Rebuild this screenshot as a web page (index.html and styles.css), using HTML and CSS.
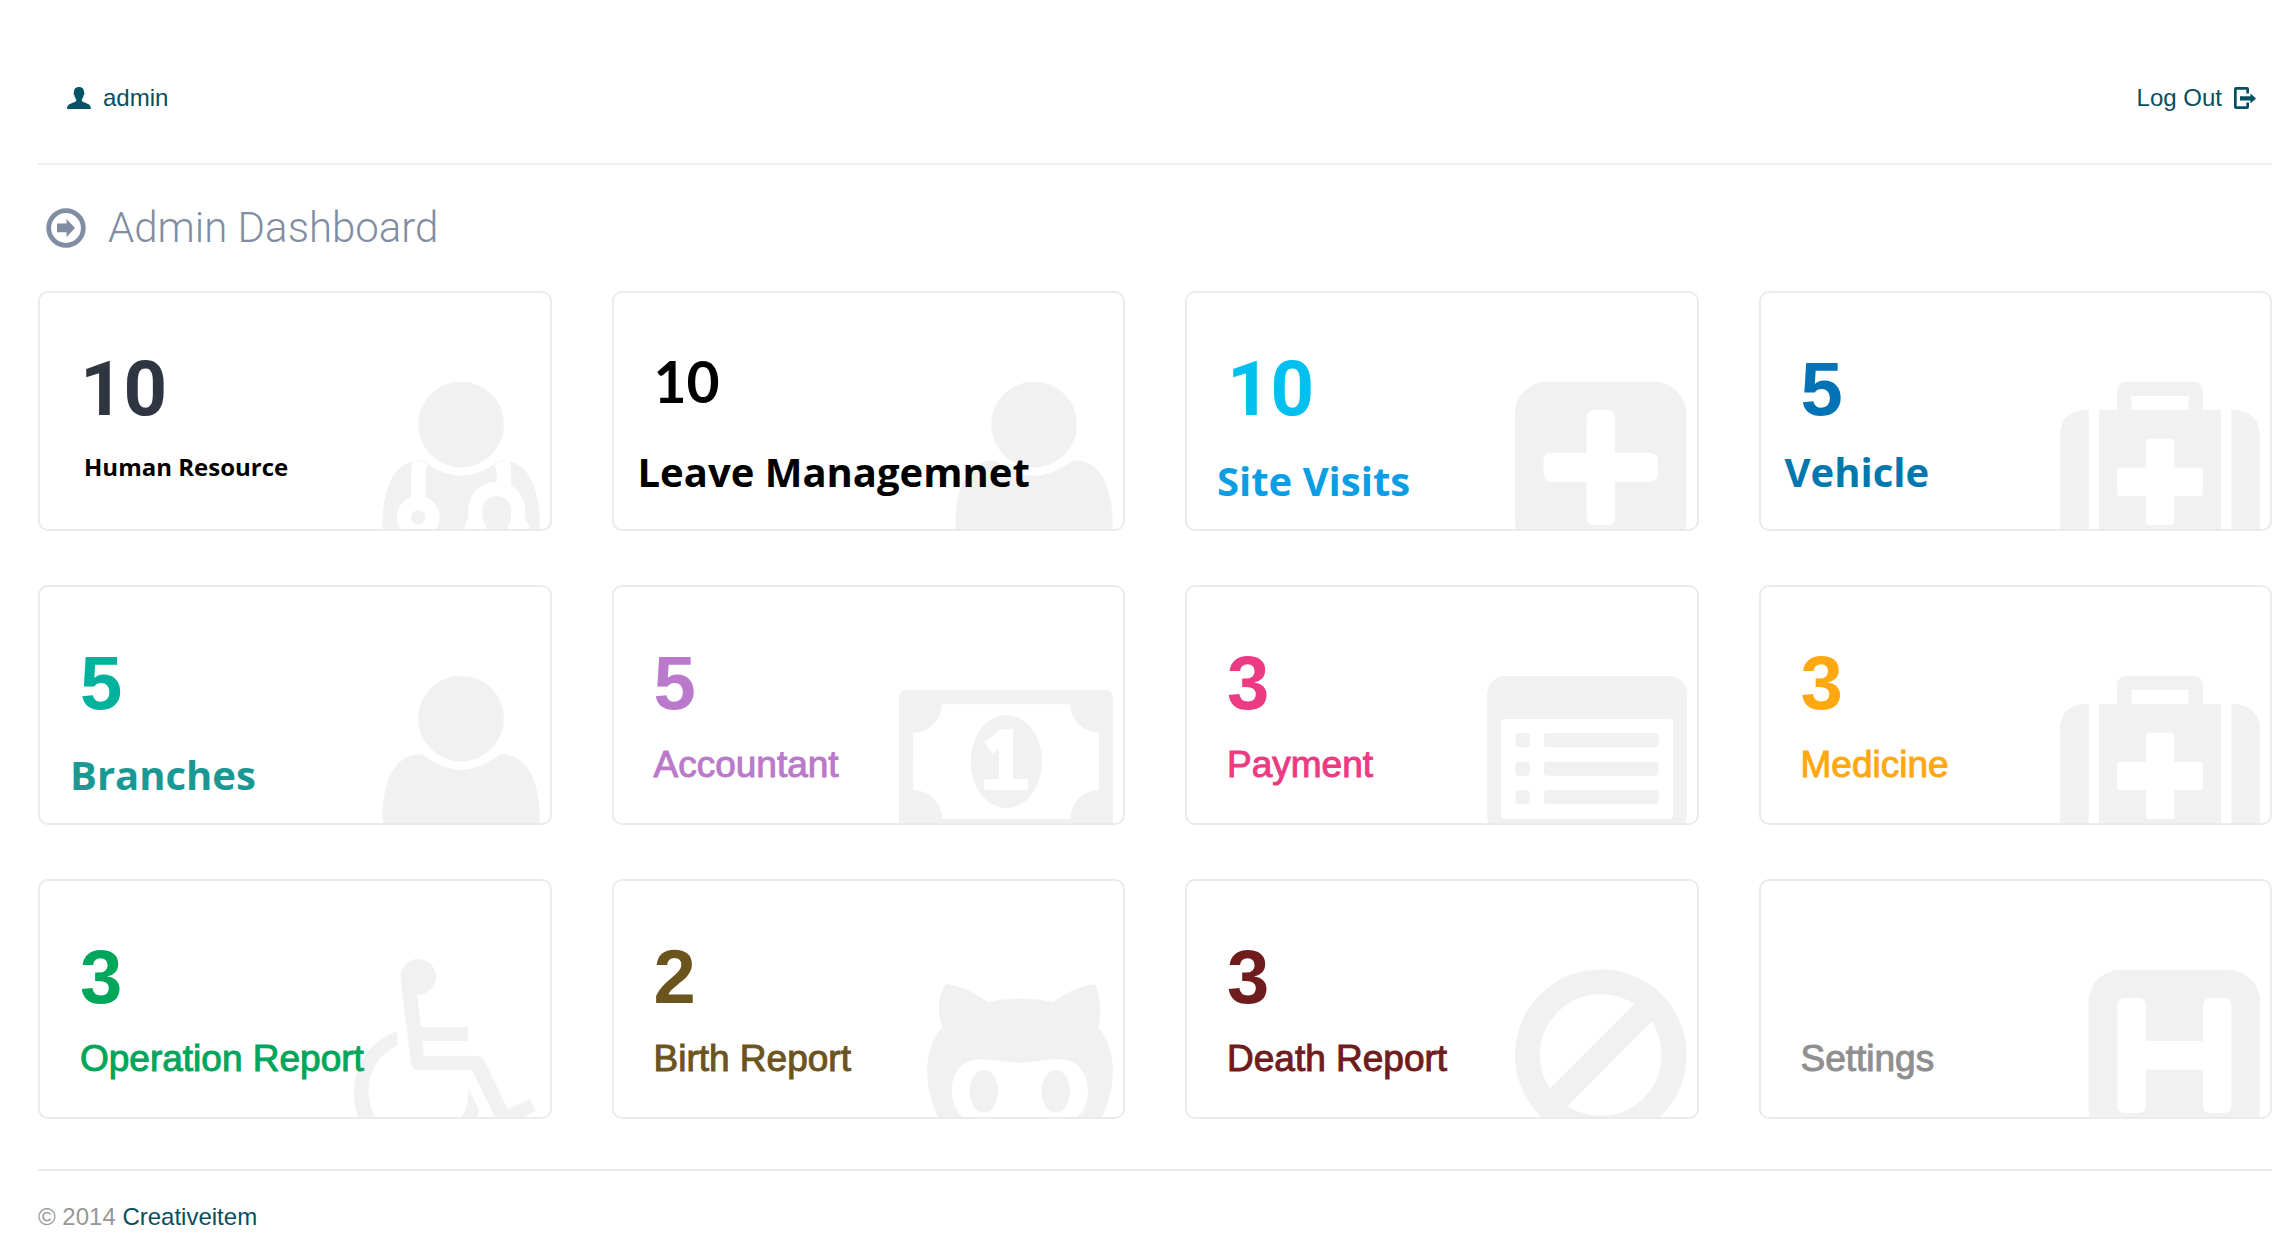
FILE: index.html
```html
<!DOCTYPE html>
<html lang="en">
<head>
<meta charset="utf-8">
<meta name="viewport" content="width=device-width, initial-scale=1">
<title>Admin Dashboard</title>
<link rel="stylesheet" href="styles.css">
</head>
<body>
<svg class="sprite" aria-hidden="true">
  <symbol id="user" viewBox="-20 0 240 160">
    <path transform="translate(52.5 -1.6) scale(.1116)" d="M1408 1405q0 120-73 189.5t-194 69.5h-874q-121 0-194-69.5t-73-189.5q0-53 3.5-103.5t14-109 26.5-108.5 43-97.5 62-81 85.5-53.5 111.5-20q9 0 42 21.5t74.5 48 108 48 133.5 21.5 133.5-21.5 108-48 74.5-48 42-21.5q61 0 111.5 20t85.5 53.5 62 81 43 97.5 26.5 108.5 14 109 3.5 103.5zm-320-893q0 159-112.5 271.5t-271.5 112.5-271.5-112.5-112.5-271.5 112.5-271.5 271.5-112.5 271.5 112.5 112.5 271.5z"/>
  </symbol>
  <symbol id="medkit" viewBox="-20 0 240 160">
    <path fill-rule="evenodd" d="M67 41V23.500q0-10.700 10.700-10.700H142.300Q153 12.800 153 23.500V41H171V165H49V41zM81.500 27V41H138.600V27zM99.500 69.700Q96 69.700 96 73.200V98.700H70.500Q67 98.700 67 102.200V123.500Q67 127 70.500 127H96V152.500Q96 156 99.500 156H120.800Q124.300 156 124.300 152.500V127H149.500Q153 127 153 123.500V102.200Q153 98.700 149.500 98.700H124.300V73.200Q124.300 69.700 120.800 69.700z"/>
    <path d="M38.800 41V165H9.900V66Q11 42 35 41zM181.300 41H185Q209 43 209.900 66V165H181.300z"/>
  </symbol>
</svg>

<header class="topbar">
  <a class="topbar__link" href="#profile">
    <svg class="topbar__icon topbar__icon--user" viewBox="0 0 24 22" aria-hidden="true"><path d="M12 0c3.600 0 5 2.200 5 5 .7.800.5 2.700-.4 3.200-.3 2-1 3-1.800 4v1.600c.4 1.200 3 1.800 5.200 2.800 2.400 1 3.700 1.900 4 5.400H0c.3-3.500 1.600-4.400 4-5.400 2.200-1 4.800-1.600 5.200-2.800v-1.600c-.8-1-1.500-2-1.800-4-.9-.5-1.100-2.400-.4-3.200C7 2.200 8.400 0 12 0z"/></svg>
    admin
  </a>
  <a class="topbar__link" href="#logout">
    Log Out
    <svg class="topbar__icon topbar__icon--exit" viewBox="0 0 22 22" aria-hidden="true"><path d="M15 6.500V2q0-2-2-2H2Q0 0 0 2v18q0 2 2 2h11q2 0 2-2v-4.500h-2.700v3.800H2.700V2.700h9.600v3.800zM6 9.300h10.500V6.400L22 11.500l-5.500 5v-3H6z"/></svg>
  </a>
</header>

<main>
  <h1 class="title">
    <svg class="title__icon" viewBox="0 0 40 40" aria-hidden="true"><circle cx="20" cy="20" r="17.300" fill="none" stroke="currentColor" stroke-width="4.800"/><path d="M11 15.500h9.500V11L29 20l-8.500 9.300v-5H11z"/></svg>
    Admin Dashboard
  </h1>

  <nav class="stats" aria-label="Dashboard sections">
    <a class="stat stat--navy" href="#human-resource">
      <svg class="stat__icon" viewBox="-20 0 240 160" aria-hidden="true">
        <use href="#user" x="-20" y="0" width="240" height="160"/>
        <g transform="translate(52.5 -1.6) scale(.1116)">
          <g class="cut">
            <path d="M256 1200V920q0-50 20-90l80 10 50 35q-22 40-22 85v240zM1152 1150V920q0-50-20-90l-80 10-50 35q22 40 22 85v190z"/>
            <circle cx="320" cy="1344" r="192"/>
            <path d="M768 1500V1280a256 256 0 0 1 512 0v220z"/>
            <circle cx="832" cy="1440" r="96"/>
            <circle cx="1216" cy="1440" r="96"/>
          </g>
          <circle cx="320" cy="1344" r="64"/>
          <path d="M896 1500V1280a128 128 0 0 1 256 0v220z"/>
          <g class="cut"><circle cx="832" cy="1440" r="96"/><circle cx="1216" cy="1440" r="96"/></g>
        </g>
      </svg>
      <span class="stat__count stat__count--tens">10</span>
      <span class="stat__label stat__label--small">Human Resource</span>
    </a>
    <a class="stat stat--black" href="#leave">
      <svg class="stat__icon" aria-hidden="true"><use href="#user"/></svg>
      <span class="stat__count stat__count--compact">10</span>
      <span class="stat__label stat__label--wide">Leave Managemnet</span>
    </a>
    <a class="stat stat--cyan" href="#site-visits">
      <svg class="stat__icon" viewBox="-20 0 240 160" aria-hidden="true">
        <rect x="38" y="12.700" width="171.400" height="171.400" rx="32"/>
        <g class="cut"><rect x="109.400" y="41" width="28.600" height="115" rx="7"/><rect x="66.600" y="84" width="114.300" height="28.700" rx="7"/></g>
      </svg>
      <span class="stat__count stat__count--tens">10</span>
      <span class="stat__label stat__label--low">Site Visits</span>
    </a>
    <a class="stat stat--blue" href="#vehicle">
      <svg class="stat__icon" aria-hidden="true"><use href="#medkit"/></svg>
      <span class="stat__count">5</span>
      <span class="stat__label stat__label--wide">Vehicle</span>
    </a>

    <a class="stat stat--teal" href="#branches">
      <svg class="stat__icon" aria-hidden="true"><use href="#user"/></svg>
      <span class="stat__count">5</span>
      <span class="stat__label stat__label--low">Branches</span>
    </a>
    <a class="stat stat--purple" href="#accountant">
      <svg class="stat__icon" viewBox="-20 0 240 160" aria-hidden="true">
        <rect x="-4" y="27" width="214" height="143" rx="7"/>
        <path class="cut" d="M39.100 41.300H167.300A28.600 28.600 0 0 0 195.900 69.700V127A28.600 28.600 0 0 0 167.300 156H39.100A28.600 28.600 0 0 0 10.200 127V69.700A28.600 28.600 0 0 0 39.100 41.300z"/>
        <ellipse cx="103.400" cy="98.500" rx="35.700" ry="46.500"/>
        <path class="cut" d="M97.500 66.300H110.200V116H124.900V127H81.300V116H95.900V85.300L89.900 90.700 81.300 79z"/>
      </svg>
      <span class="stat__count">5</span>
      <span class="stat__label">Accountant</span>
    </a>
    <a class="stat stat--pink" href="#payment">
      <svg class="stat__icon" viewBox="-20 0 240 160" aria-hidden="true">
        <rect x="10.100" y="13" width="200" height="157" rx="18"/>
        <rect class="cut" x="24" y="56" width="172" height="100" rx="3.500"/>
        <rect x="38.400" y="70" width="14.500" height="14.200" rx="3.500"/><rect x="66.900" y="70" width="114.600" height="14.200" rx="3.500"/>
        <rect x="38.400" y="98.500" width="14.500" height="14.200" rx="3.500"/><rect x="66.900" y="98.500" width="114.600" height="14.200" rx="3.500"/>
        <rect x="38.400" y="127" width="14.500" height="14.200" rx="3.500"/><rect x="66.900" y="127" width="114.600" height="14.200" rx="3.500"/>
      </svg>
      <span class="stat__count">3</span>
      <span class="stat__label">Payment</span>
    </a>
    <a class="stat stat--orange" href="#medicine">
      <svg class="stat__icon" aria-hidden="true"><use href="#medkit"/></svg>
      <span class="stat__count">3</span>
      <span class="stat__label">Medicine</span>
    </a>

    <a class="stat stat--green" href="#operation-report">
      <svg class="stat__icon" viewBox="-20 0 240 160" aria-hidden="true">
        <path d="M70.400 20A17.800 17.800 0 1 1 87.100 37.600L91.100 70H137.900V84H92.500L93.600 98.700H147Q151.500 98.700 153.500 102.500L177.900 152.300 200 142.300 205.700 154.300 190 162H166L141.800 113H88Q81.500 112.500 81 106z"/>
        <path d="M66.800 74 67.900 88Q38.600 103 38.600 134.700 38.600 149 46 162H29.300Q23.900 150 23.900 135 25 92 66.800 74zM138.200 131.300 149.300 153.700 146.500 162H131Q139.500 148 138.200 131.300z"/>
      </svg>
      <span class="stat__count">3</span>
      <span class="stat__label">Operation Report</span>
    </a>
    <a class="stat stat--brown" href="#birth-report">
      <svg class="stat__icon" viewBox="-20 0 240 160" aria-hidden="true">
        <path d="M42.700 27Q63 29 84.500 45Q101 41.600 117.300 41.600T150.200 45Q172 29 192 27Q197.400 38 197.400 51.300 197.400 61 194.900 70 209.900 88 209.900 113 209.900 140 197 164H37Q24.100 140 24.100 113 24.100 88 39.500 70 35.900 61 35.900 51.300 35.900 38 42.700 27z"/>
        <path class="cut" d="M64 164Q48.800 153 48.800 134.700C48.800 115 60 102.300 77.400 102.300 92 102.300 103 105.700 117 105.700S142 102.300 156.500 102.300C174 102.300 184.900 115 184.900 134.700Q184.900 153 170 164z"/>
        <ellipse cx="80.900" cy="134.300" rx="14.200" ry="21.400"/><ellipse cx="152.700" cy="134.300" rx="14.200" ry="21.400"/>
      </svg>
      <span class="stat__count">2</span>
      <span class="stat__label">Birth Report</span>
    </a>
    <a class="stat stat--maroon" href="#death-report">
      <svg class="stat__icon" viewBox="-20 0 240 160" aria-hidden="true">
        <g fill="none" stroke="currentColor" stroke-width="25"><circle cx="123.800" cy="98" r="73.300"/><path d="M72.500 149.300 175 46.800"/></g>
      </svg>
      <span class="stat__count">3</span>
      <span class="stat__label">Death Report</span>
    </a>
    <a class="stat stat--grey" href="#settings">
      <svg class="stat__icon" viewBox="-20 0 240 160" aria-hidden="true">
        <rect x="38.600" y="12.700" width="171.400" height="171.400" rx="32"/>
        <g class="cut"><rect x="67.300" y="41" width="28.600" height="115" rx="7"/><rect x="153" y="41" width="28.600" height="115" rx="7"/><rect x="90" y="84" width="70" height="28.700"/></g>
      </svg>
      <span class="stat__count"></span>
      <span class="stat__label">Settings</span>
    </a>
  </nav>
</main>

<footer class="footer">© 2014 <a class="footer__link" href="#creativeitem">Creativeitem</a></footer>
</body>
</html>
```
FILE: styles.css
```css
* {
  box-sizing: border-box;
}

body {
  margin: 0;
  padding: 0 21px 0 38px;
  background: #fff;
  color: #979797;
  font-family: "Liberation Sans", Arial, sans-serif;
  font-size: 24px;
  line-height: 28px;
}

a {
  color: #064f60;
  text-decoration: none;
}

svg {
  fill: currentColor;
}

.sprite {
  position: absolute;
  width: 0;
  height: 0;
}

/* Top bar */
.topbar {
  display: flex;
  justify-content: space-between;
  padding: 84px 16px 51px 29px;
  border-bottom: 2px solid #eee;
}

.topbar__link {
  display: flex;
  align-items: center;
  gap: 12px;
}

.topbar__icon {
  height: 22px;
}

.topbar__icon--user {
  width: 24px;
  color: #005466;
}

.topbar__icon--exit {
  width: 22px;
}

/* Page title */
.title {
  display: flex;
  align-items: center;
  gap: 22px;
  margin: 0;
  padding: 39px 8px;
  color: #818da2;
  font-family: Roboto, "Liberation Sans", sans-serif;
  font-size: 42px;
  font-weight: 300;
  line-height: 48px;
}

.title__icon {
  width: 40px;
  height: 40px;
}

/* Cards */
.stats {
  display: grid;
  grid-template-columns: repeat(4, minmax(0, 1fr));
  gap: 54px 60px;
}

.stat {
  position: relative;
  display: flex;
  flex-direction: column;
  min-height: 240px;
  padding: 56px 16px 16px 40px;
  overflow: hidden;
  border: 2px solid #ebebeb;
  border-radius: 10px;
}

.stat__icon {
  position: absolute;
  right: 0;
  bottom: 0;
  width: 240px;
  height: 160px;
  color: #f1f1f1;
}

.cut {
  fill: #fff;
}

.stat__count,
.stat__label {
  position: relative;
  white-space: nowrap;
}

.stat__count {
  min-height: 80px;
  font-size: 76px;
  font-weight: 700;
  line-height: 80px;
}

.stat__count--tens {
  font-family: Roboto, "Liberation Sans", sans-serif;
}

.stat__count--compact {
  min-height: 0;
  margin-bottom: 16px;
  font-family: Lato, sans-serif;
  font-size: 57px;
  line-height: 64px;
}

.stat__label {
  margin-top: 20px;
  font-size: 37px;
  line-height: 44px;
  -webkit-text-stroke: 1px currentColor;
}

.stat__label--small,
.stat__label--wide,
.stat__label--low {
  font-family: "Open Sans", sans-serif;
  font-weight: 700;
  -webkit-text-stroke: 0;
}

.stat__label--small {
  margin: 24px 0 0 4px;
  font-size: 24px;
  line-height: 28px;
}

.stat__label--wide,
.stat__label--low {
  font-size: 40px;
  line-height: 52px;
}

.stat__label--wide {
  margin: 17px 0 0 -16px;
}

.stat__label--low {
  margin: 26px 0 0 -10px;
}

.stat--navy { color: #303641; }
.stat--navy .stat__label { color: #000; }
.stat--black { color: #000; }
.stat--cyan { color: #00c0ef; }
.stat--cyan .stat__label { color: #0b9ee5; }
.stat--blue { color: #0073b7; }
.stat--blue .stat__label { color: #0077ad; }
.stat--teal { color: #00b29e; }
.stat--teal .stat__label { color: #1a9994; }
.stat--purple { color: #ba79cb; }
.stat--pink { color: #ec3b83; }
.stat--orange { color: #ffa812; }
.stat--green { color: #00a65a; }
.stat--brown { color: #6c541e; }
.stat--maroon { color: #701c1c; }
.stat--grey { color: #8f8f8f; }

/* Footer */
.footer {
  margin-top: 50px;
  padding: 32px 0 20px;
  border-top: 2px solid #ebebeb;
}
```
